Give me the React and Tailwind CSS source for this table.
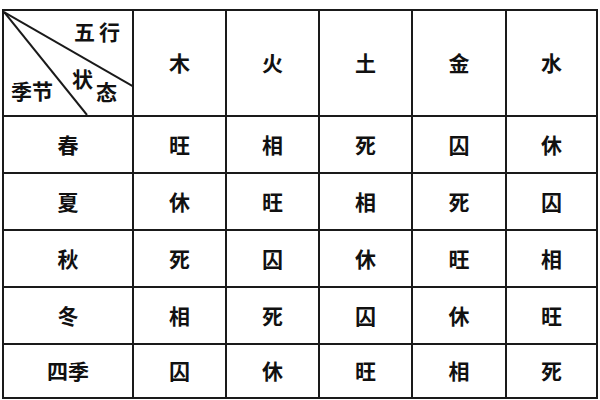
import React from 'react';

const heads = ['木', '火', '土', '金', '水'];

const rows = [
  ['春', '旺', '相', '死', '囚', '休'],
  ['夏', '休', '旺', '相', '死', '囚'],
  ['秋', '死', '囚', '休', '旺', '相'],
  ['冬', '相', '死', '囚', '休', '旺'],
  ['四季', '囚', '休', '旺', '相', '死'],
];

const font = { fontFamily: '"Noto Sans CJK SC", "Noto Sans", sans-serif' };

const CornerCell = () => (
  <div className="relative border-r-2 border-b-2 border-[#1a1a1a]">
    <svg className="absolute inset-0" width="130" height="104" viewBox="0 0 130 104">
      <line x1="0" y1="1" x2="130" y2="76" stroke="#1a1a1a" strokeWidth="2" />
      <line x1="0" y1="1" x2="83" y2="104" stroke="#1a1a1a" strokeWidth="2" />
    </svg>
    <span className="absolute left-[70px] top-[10px] text-[21px] font-bold leading-none tracking-[4px] text-[#111]">五行</span>
    <span className="absolute left-[68px] top-[57px] text-[21px] font-bold leading-none text-[#111]">状</span>
    <span className="absolute left-[92px] top-[70px] text-[21px] font-bold leading-none text-[#111]">态</span>
    <span className="absolute left-[7px] top-[69px] text-[21px] font-bold leading-none text-[#111]">季节</span>
  </div>
);

const Cell = ({ children }) => (
  <div className="flex items-center justify-center border-r-2 border-b-2 border-[#1a1a1a] text-[21px] font-bold text-[#111]">
    {children}
  </div>
);

export default function App() {
  return (
    <div className="w-[600px] h-[400px] overflow-hidden bg-white" style={font}>
      <div className="ml-[2px] mt-[9px] w-[596px] border-t-2 border-l-2 border-[#1a1a1a] grid grid-cols-[130px_93px_93px_93px_94px_91px] grid-rows-[106px_57px_57px_57px_57px_54px]">
        <CornerCell />
        {heads.map((h) => (
          <Cell key={h}>{h}</Cell>
        ))}
        {rows.map((r) =>
          r.map((c, i) => <Cell key={r[0] + i}>{c}</Cell>)
        )}
      </div>
    </div>
  );
}
